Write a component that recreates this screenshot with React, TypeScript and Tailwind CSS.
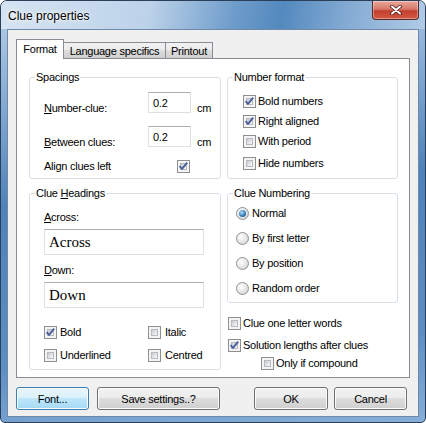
import React from 'react';

const ui = "font-['Liberation_Sans',Arial,sans-serif] text-[11px] tracking-[-0.25px] leading-[14px] text-black";

const Check: React.FC<{checked?: boolean}> = ({checked}) => (
  <span className="relative inline-block w-[13px] h-[13px] shrink-0 border border-[#8e8f8f] bg-[#f4f4f4] p-[2px]">
    <span className="block w-full h-full border border-[#b7bbc1] bg-[linear-gradient(135deg,#c9ccd1,#e6e7e9_60%,#f7f7f7)]" />
    {checked && (
      <svg className="absolute left-0 top-0" width="11" height="11" viewBox="0 0 11 11">
        <path d="M1.6 5.2 L4 7.9 L9.2 1.6" fill="none" stroke="#4a5f9c" strokeWidth="1.9" strokeLinejoin="round" />
      </svg>
    )}
  </span>
);

const Radio: React.FC<{checked?: boolean}> = ({checked}) => (
  <span className="inline-flex items-center justify-center w-[13px] h-[13px] shrink-0 rounded-full border border-[#8f9194] bg-[radial-gradient(circle_at_35%_35%,#ffffff,#e4e4e4_55%,#c8c9cb)]">
    {checked && (
      <span className="block w-[7px] h-[7px] rounded-full bg-[radial-gradient(circle_at_40%_35%,#b9e1f8,#3d86c2_50%,#15426f)]" />
    )}
  </span>
);

const Row: React.FC<{checked?: boolean; label: React.ReactNode; className?: string}> = ({checked, label, className}) => (
  <div className={`flex items-center gap-[2px] h-[14px] ${className ?? ''}`}>
    <Check checked={checked} />
    <span>{label}</span>
  </div>
);

const RadioRow: React.FC<{checked?: boolean; label: string; className?: string}> = ({checked, label, className}) => (
  <div className={`flex items-center gap-[3px] h-[14px] ${className ?? ''}`}>
    <Radio checked={checked} />
    <span>{label}</span>
  </div>
);

const Group: React.FC<{title: React.ReactNode; className?: string; children: React.ReactNode}> = ({title, className, children}) => (
  <fieldset className={`border border-[#d5dfe5] rounded-[3px] min-w-0 ${className ?? ''}`}>
    <legend className="ml-[5px] px-[1px] leading-[14px]">{title}</legend>
    {children}
  </fieldset>
);

const TextBox: React.FC<{className?: string; children: React.ReactNode}> = ({className, children}) => (
  <div className={`flex items-center bg-white border border-[#dde1e7] border-t-[#abadb3] ${className ?? ''}`}>{children}</div>
);

const Button: React.FC<{className?: string; primary?: boolean; children: React.ReactNode}> = ({className, primary, children}) => (
  <div
    className={`h-[23px] flex items-center justify-center rounded-[3px] border shadow-[inset_0_0_0_1px_#fbfbfb] ${
      primary
        ? 'border-[#3c7fb1] bg-[linear-gradient(#eaf6fd,#d9f0fc_50%,#bee6fd_50%,#a7d9f5)]'
        : 'border-[#707070] bg-[linear-gradient(#f2f2f2,#ebebeb_50%,#dddddd_50%,#cfcfcf)]'
    } ${className ?? ''}`}
  >
    {children}
  </div>
);

export default function App() {
  return (
    <div className={`w-[426px] h-[423px] flex flex-col border border-[#2b3f58] rounded-t-[7px] rounded-b-[5px] overflow-hidden bg-[linear-gradient(175deg,#b9d0e9_0%,#8fb2d8_18%,#4f82b9_45%,#5d8ec3_80%,#86aed8_100%)] ${ui}`}>
      {/* title bar */}
      <div className="h-[28px] shrink-0 flex items-start justify-between bg-[linear-gradient(100deg,#d6e4f3_0%,#bcd2e9_35%,#6e9cca_55%,#5389be_66%,#86acd4_82%,#b0cbe6_100%)]">
        <span className="ml-[7px] mt-[7px] font-['Liberation_Sans',Arial,sans-serif] text-[12px] tracking-normal leading-[16px] [text-shadow:0_0_6px_#ffffff,0_0_3px_#ffffff]">
          Clue properties
        </span>
        <div className="mr-[6px] w-[47px] h-[19px] flex items-center justify-center rounded-b-[4px] border border-t-0 border-[#5b2a2a] bg-[linear-gradient(#e8a89b,#d7786a_45%,#c2402e_55%,#d35a44)] shadow-[inset_0_0_0_1px_rgba(255,255,255,0.35)]">
          <svg width="12" height="10" viewBox="0 0 12 10">
            <path d="M2 1.5 L10 8.5 M10 1.5 L2 8.5" stroke="#4a1c18" strokeWidth="3.6" strokeLinecap="round" />
            <path d="M2 1.5 L10 8.5 M10 1.5 L2 8.5" stroke="#ffffff" strokeWidth="2" strokeLinecap="round" />
          </svg>
        </div>
      </div>

      {/* body */}
      <div className="flex-1 px-[6px] pb-[5px]">
        <div className="h-full border border-[#6f89a8] bg-[#f0f0f0] flex flex-col">
          {/* tabs */}
          <div className="h-[19px] mt-[9px] px-[8px] flex items-end">
            <div className="relative z-10 -mb-px w-[48px] h-[20px] bg-white border border-b-0 border-[#898c95] text-center pt-[2px]">Format</div>
            <div className="-ml-px w-[103px] h-[16px] border border-b-0 border-[#898c95] bg-[linear-gradient(#f2f2f2,#ebebeb_50%,#dddddd_50%,#cfcfcf)] text-center pt-[1px]">
              Language specifics
            </div>
            <div className="-ml-px w-[48px] h-[16px] border border-b-0 border-[#898c95] bg-[linear-gradient(#f2f2f2,#ebebeb_50%,#dddddd_50%,#cfcfcf)] text-center pt-[1px]">
              Printout
            </div>
          </div>

          {/* panel */}
          <div className="mx-[8px] h-[320px] border border-[#898c95] bg-white flex gap-[6px] pl-[12px] pt-[11px]">
            <div className="w-[192px] flex flex-col gap-[7px]">
              <Group title="Spacings" className="h-[109px]">
                <div className="pl-[14px]">
                  <div className="flex h-[21px] mt-[8px]">
                    <span className="w-[104px] pt-[9px]"><u>N</u>umber-clue:</span>
                    <TextBox className="w-[43px] h-[21px] pl-[4px]">0.2</TextBox>
                    <span className="ml-[6px] pt-[9px]">cm</span>
                  </div>
                  <div className="flex h-[21px] mt-[13px]">
                    <span className="w-[104px] pt-[9px]"><u>B</u>etween clues:</span>
                    <TextBox className="w-[43px] h-[21px] pl-[4px]">0.2</TextBox>
                    <span className="ml-[6px] pt-[9px]">cm</span>
                  </div>
                  <div className="flex items-center h-[14px] mt-[12px]">
                    <span className="w-[133px]">Align clues left</span>
                    <Check checked />
                  </div>
                </div>
              </Group>

              <Group title={<>Clue <u>H</u>eadings</>} className="h-[184px]">
                <div className="pl-[14px]">
                  <div className="mt-[10px] h-[14px]"><u>A</u>cross:</div>
                  <TextBox className="mt-[5px] w-[160px] h-[26px] pl-[4px] font-['Liberation_Serif','Times_New_Roman',serif] text-[15px] tracking-normal">
                    Across
                  </TextBox>
                  <div className="mt-[8px] h-[14px]"><u>D</u>own:</div>
                  <TextBox className="mt-[5px] w-[160px] h-[26px] pl-[4px] font-['Liberation_Serif','Times_New_Roman',serif] text-[15px] tracking-normal">
                    Down
                  </TextBox>
                  <div className="grid grid-cols-[104px_1fr] mt-[17px] gap-y-[9px]">
                    <Row checked label="Bold" className="gap-[3px]" />
                    <Row label="Italic" className="gap-[4px]" />
                    <Row label="Underlined" className="gap-[3px]" />
                    <Row label="Centred" className="gap-[4px]" />
                  </div>
                </div>
              </Group>
            </div>

            <div className="w-[171px] flex flex-col">
              <Group title="Number format" className="h-[109px]">
                <div className="pl-[15px]">
                  <Row checked label="Bold numbers" className="mt-[10px]" />
                  <Row checked label="Right aligned" className="mt-[6px]" />
                  <Row label="With period" className="mt-[6px]" />
                  <Row label="Hide numbers" className="mt-[8px]" />
                </div>
              </Group>

              <Group title="Clue Numbering" className="h-[117px] mt-[7px]">
                <div className="pl-[8px]">
                  <RadioRow checked label="Normal" className="mt-[6px]" />
                  <RadioRow label="By first letter" className="mt-[11px]" />
                  <RadioRow label="By position" className="mt-[11px]" />
                  <RadioRow label="Random order" className="mt-[11px]" />
                </div>
              </Group>

              <Row label="Clue one letter words" className="mt-[13px] pl-[1px]" />
              <Row checked label="Solution lengths after clues" className="mt-[8px] pl-[1px]" />
              <Row label="Only if compound" className="mt-[4px] pl-[34px]" />
            </div>
          </div>

          {/* buttons */}
          <div className="mt-[9px] pl-[8px] pr-[11px] flex">
            <Button primary className="w-[73px]">Font...</Button>
            <Button className="ml-[8px] w-[123px]">Save settings..?</Button>
            <div className="flex-1" />
            <Button className="w-[74px]">OK</Button>
            <Button className="ml-[6px] w-[73px]">Cancel</Button>
          </div>
        </div>
      </div>
    </div>
  );
}
